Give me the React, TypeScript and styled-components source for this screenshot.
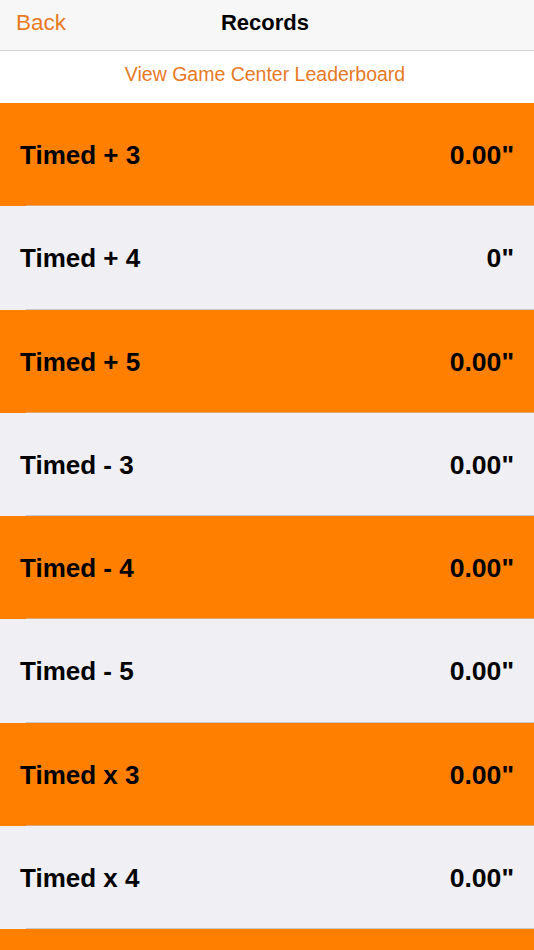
import React from 'react';
import styled, { createGlobalStyle } from 'styled-components';

const GlobalStyle = createGlobalStyle`
	html, body {
		margin: 0;
		padding: 0;
		background: #efeff4;
		font-family: 'Liberation Sans', Arial, sans-serif;
		-webkit-font-smoothing: antialiased;
	}
`;

const Screen = styled.div`
	width: 534px;
	height: 950px;
	overflow: hidden;
	display: flex;
	flex-direction: column;
	background: #efeff4;
`;

const NavBar = styled.header`
	height: 50px;
	flex-shrink: 0;
	display: grid;
	grid-template-columns: 1fr auto 1fr;
	align-items: center;
	background: #f7f7f7;
	border-bottom: 1px solid #d4d4d4;
	padding: 0 16px;
`;

const BackButton = styled.span`
	justify-self: start;
	color: #e8791f;
	font-size: 22.5px;
	margin-top: -5px;
`;

const Title = styled.h1`
	margin: -5px 4px 0 0;
	font-size: 22px;
	font-weight: 700;
	color: #000;
`;

const LinkRow = styled.div`
	height: 52px;
	flex-shrink: 0;
	display: flex;
	align-items: center;
	justify-content: center;
	background: #fff;
	color: #e8791f;
	font-size: 19.5px;
	padding: 0 4px 6px 0;
	box-sizing: border-box;
`;

const Row = styled.div<{ $highlight: boolean }>`
	position: relative;
	height: 103.25px;
	flex-shrink: 0;
	box-sizing: border-box;
	display: flex;
	align-items: center;
	justify-content: space-between;
	padding: 2px 20px 0 20px;
	background: ${(p) => (p.$highlight ? '#ff8000' : '#efeff4')};
	font-size: 26px;
	font-weight: 700;
	color: #000;

	&::after {
		content: '';
		position: absolute;
		left: 26px;
		right: 0;
		bottom: 0;
		height: 1px;
		background: ${(p) => (p.$highlight ? 'rgba(200, 199, 204, 0.55)' : '#c8c7cc')};
	}
`;

const Value = styled.span`
	font-size: 26.6px;
`;

const records = [
	{ name: 'Timed + 3', value: '0.00"' },
	{ name: 'Timed + 4', value: '0"' },
	{ name: 'Timed + 5', value: '0.00"' },
	{ name: 'Timed - 3', value: '0.00"' },
	{ name: 'Timed - 4', value: '0.00"' },
	{ name: 'Timed - 5', value: '0.00"' },
	{ name: 'Timed x 3', value: '0.00"' },
	{ name: 'Timed x 4', value: '0.00"' }
];

export default function App() {
	return (
		<>
			<GlobalStyle />
			<Screen>
				<NavBar>
					<BackButton>Back</BackButton>
					<Title>Records</Title>
					<span />
				</NavBar>
				<LinkRow>View Game Center Leaderboard</LinkRow>
				{records.map((r, i) => (
					<Row key={r.name} $highlight={i % 2 === 0}>
						<span>{r.name}</span>
						<Value>{r.value}</Value>
					</Row>
				))}
				{/* next row, scrolled below the fold */}
				<Row $highlight />
			</Screen>
		</>
	);
}
